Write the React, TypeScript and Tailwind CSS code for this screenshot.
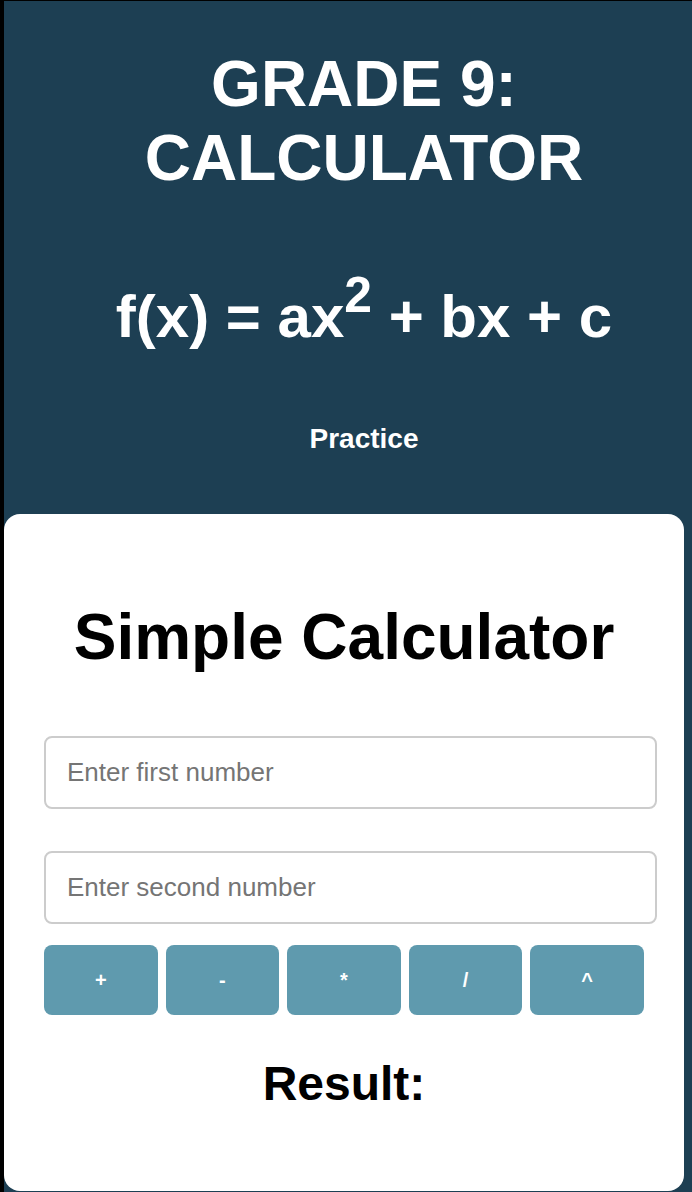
import React from "react";

export default function App() {
  const ops = ["+", "-", "*", "/", "^"];
  return (
    <div className="min-h-[1192px] bg-black pl-[4px] pt-[1px]" style={{ fontFamily: '"Liberation Sans", Arial, sans-serif' }}>
      <div className="min-h-[1191px] bg-[#1d3f53] pb-[3px]">
        <header className="pl-[32px] pt-[47px] text-center text-white">
          <h1 className="text-[64px] font-bold leading-[1.15]">GRADE 9:<br />CALCULATOR</h1>
          <div className="mt-[87px] text-[60px] font-bold leading-[1.15]">
            f(x) = ax<sup className="text-[0.83em]">2</sup> + bx + c
          </div>
          <div className="mt-[72px] text-[28px] font-bold leading-[1.15]">Practice</div>
        </header>
        <main className="mt-[59px] w-[680px] rounded-[16px] bg-white px-[40px] pb-[80px] pt-[87px]">
          <h2 className="text-center text-[64px] font-bold leading-[1.15] text-black">Simple Calculator</h2>
          <input
            placeholder="Enter first number"
            className="mt-[61px] block h-[73px] w-[613px] rounded-[8px] border-2 border-[#cccccc] px-[21px] text-[26px] text-black outline-none placeholder:text-[#757575]"
          />
          <input
            placeholder="Enter second number"
            className="mt-[42px] block h-[73px] w-[613px] rounded-[8px] border-2 border-[#cccccc] px-[21px] text-[26px] text-black outline-none placeholder:text-[#757575]"
          />
          <div className="mt-[21px] flex gap-[8px]">
            {ops.map((o) => (
              <button key={o} className="h-[70px] w-[114px] rounded-[8px] bg-[#5f9aae] text-[20px] font-bold text-white">
                {o}
              </button>
            ))}
          </div>
          <h3 className="mt-[41px] text-center text-[48px] font-bold leading-[1.15] text-black">Result:</h3>
        </main>
      </div>
    </div>
  );
}
